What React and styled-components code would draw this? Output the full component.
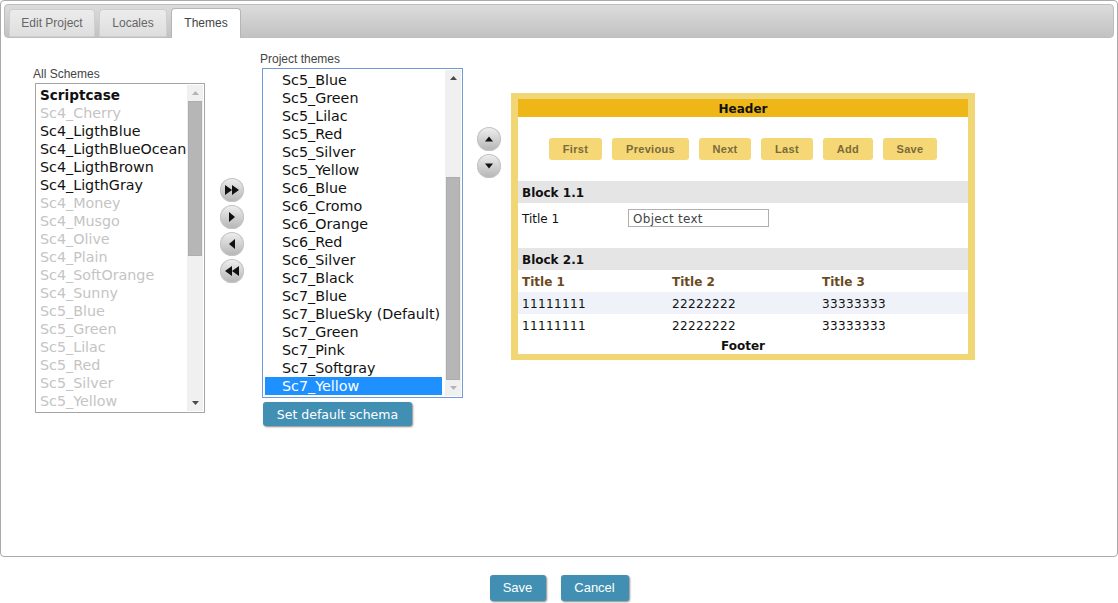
import React from 'react';
import styled, { createGlobalStyle } from 'styled-components';

const allSchemes = [
  ['Scriptcase', 'bold'],
  ['Sc4_Cherry', 'off'],
  ['Sc4_LigthBlue', 'on'],
  ['Sc4_LigthBlueOcean', 'on'],
  ['Sc4_LigthBrown', 'on'],
  ['Sc4_LigthGray', 'on'],
  ['Sc4_Money', 'off'],
  ['Sc4_Musgo', 'off'],
  ['Sc4_Olive', 'off'],
  ['Sc4_Plain', 'off'],
  ['Sc4_SoftOrange', 'off'],
  ['Sc4_Sunny', 'off'],
  ['Sc5_Blue', 'off'],
  ['Sc5_Green', 'off'],
  ['Sc5_Lilac', 'off'],
  ['Sc5_Red', 'off'],
  ['Sc5_Silver', 'off'],
  ['Sc5_Yellow', 'off'],
];

const projectThemes = [
  'Sc5_Blue', 'Sc5_Green', 'Sc5_Lilac', 'Sc5_Red', 'Sc5_Silver', 'Sc5_Yellow',
  'Sc6_Blue', 'Sc6_Cromo', 'Sc6_Orange', 'Sc6_Red', 'Sc6_Silver', 'Sc7_Black',
  'Sc7_Blue', 'Sc7_BlueSky (Default)', 'Sc7_Green', 'Sc7_Pink', 'Sc7_Softgray', 'Sc7_Yellow',
];

const previewButtons = [
  ['First', 53], ['Previous', 77], ['Next', 52], ['Last', 52], ['Add', 50], ['Save', 54],
];

const Triangle = ({ dir, muted }) => {
  const points = { up: '0,4 3.5,0 7,4', down: '0,0 7,0 3.5,4' };
  return (
    <svg width="7" height="4" viewBox="0 0 7 4">
      <polygon points={points[dir]} fill={muted ? '#b4b4b4' : '#4a4a4a'} />
    </svg>
  );
};

const Scrollbar = ({ before, thumb, mutedUp, mutedDown }) => (
  <ScrollTrack>
    <ScrollArrow><Triangle dir="up" muted={mutedUp} /></ScrollArrow>
    <ScrollSlot>
      <ScrollThumb $before={before} $height={thumb} />
    </ScrollSlot>
    <ScrollArrow><Triangle dir="down" muted={mutedDown} /></ScrollArrow>
  </ScrollTrack>
);

const MoveIcon = ({ d }) => (
  <svg width="14" height="12" viewBox="0 0 14 12">
    <path d={d} fill="#111" />
  </svg>
);

const App = () => {
  return (
    <Page>
      <GlobalStyle />
      <Panel>
        <TabBar>
          <Tab $width={86}>Edit Project</Tab>
          <Tab $width={68}>Locales</Tab>
          <Tab $width={70} $active>Themes</Tab>
        </TabBar>
        <Content>
          <SchemeColumn $top={29}>
            <FieldLabel>All Schemes</FieldLabel>
            <ListBox $width={170}>
              <Options>
                {allSchemes.map(([name, state]) => (
                  <Option key={name} $state={state}>{name}</Option>
                ))}
              </Options>
              <Scrollbar before={0} thumb={155} mutedUp />
            </ListBox>
          </SchemeColumn>

          <MoveButtons $top={140} $left={15}>
            <RoundButton><MoveIcon d="M0 1l7 5-7 5zM7 1l7 5-7 5z" /></RoundButton>
            <RoundButton><MoveIcon d="M4 1l6 5-6 5z" /></RoundButton>
            <RoundButton><MoveIcon d="M10 1l-6 5 6 5z" /></RoundButton>
            <RoundButton><MoveIcon d="M7 1l-7 5 7 5zM14 1l-7 5 7 5z" /></RoundButton>
          </MoveButtons>

          <SchemeColumn $top={14} $left={16}>
            <FieldLabel>Project themes</FieldLabel>
            <ListBox $width={201} $focus>
              <Options>
                {projectThemes.map((name) => (
                  <ProjectOption key={name} $selected={name === 'Sc7_Yellow'}>{name}</ProjectOption>
                ))}
              </Options>
              <Scrollbar before={91} thumb={203} mutedDown />
            </ListBox>
            <DefaultButton>Set default schema</DefaultButton>
          </SchemeColumn>

          <MoveButtons $top={89} $left={14}>
            <RoundButton><MoveIcon d="M3 8.5l4-5 4 5z" /></RoundButton>
            <RoundButton><MoveIcon d="M3 3.5l4 5 4-5z" /></RoundButton>
          </MoveButtons>

          <Preview>
            <PreviewHeader>Header</PreviewHeader>
            <PreviewToolbar>
              {previewButtons.map(([label, width]) => (
                <PreviewButton key={label} $width={width}>{label}</PreviewButton>
              ))}
            </PreviewToolbar>
            <BlockTitle>Block 1.1</BlockTitle>
            <FieldRow>
              <FieldName>Title 1</FieldName>
              <ObjectInput>Object text</ObjectInput>
            </FieldRow>
            <BlockTitle>Block 2.1</BlockTitle>
            <GridRow $head>
              <GridCell>Title 1</GridCell>
              <GridCell>Title 2</GridCell>
              <GridCell>Title 3</GridCell>
            </GridRow>
            <GridRow $odd>
              <GridCell>11111111</GridCell>
              <GridCell>22222222</GridCell>
              <GridCell>33333333</GridCell>
            </GridRow>
            <GridRow>
              <GridCell>11111111</GridCell>
              <GridCell>22222222</GridCell>
              <GridCell>33333333</GridCell>
            </GridRow>
            <PreviewFooter>Footer</PreviewFooter>
          </Preview>
        </Content>
      </Panel>
      <Actions>
        <ActionButton $width={56}>Save</ActionButton>
        <ActionButton $width={68}>Cancel</ActionButton>
      </Actions>
    </Page>
  );
};

const GlobalStyle = createGlobalStyle`
  html, body {
    margin: 0;
    padding: 0;
    background: #fff;
  }
  body {
    font-family: "Liberation Sans", Arial, sans-serif;
    font-size: 12px;
  }
`;

const Page = styled.div`
  width: 1118px;
  height: 603px;
  overflow: hidden;
  box-sizing: border-box;
`;

const Panel = styled.div`
  box-sizing: border-box;
  width: 1118px;
  height: 557px;
  padding: 3px;
  border: 1px solid #aaa;
  border-radius: 4px;
  display: flex;
  flex-direction: column;
`;

const TabBar = styled.div`
  box-sizing: border-box;
  height: 34px;
  width: 1110px;
  margin: 0;
  padding: 4px 0 0 4px;
  display: flex;
  gap: 4px;
  align-items: flex-end;
  border: 1px solid #bdbdbd;
  border-radius: 4px;
  background: linear-gradient(#dcdcdc, #c2c2c2);
`;

const Tab = styled.div`
  box-sizing: border-box;
  width: ${(p) => p.$width}px;
  height: ${(p) => (p.$active ? '30px' : '28px')};
  margin-bottom: ${(p) => (p.$active ? '-1px' : '0')};
  line-height: ${(p) => (p.$active ? '28px' : '27px')};
  text-align: center;
  font-size: 12px;
  color: ${(p) => (p.$active ? '#444' : '#666')};
  border: 1px solid ${(p) => (p.$active ? '#b5b5b5' : '#cfcfcf')};
  border-bottom: ${(p) => (p.$active ? '0' : '1px solid #cfcfcf')};
  border-radius: 4px 4px 0 0;
  background: ${(p) => (p.$active ? '#fff' : 'linear-gradient(#ececec, #dedede)')};
`;

const Content = styled.div`
  display: flex;
  align-items: flex-start;
  padding-left: 29px;
`;

const SchemeColumn = styled.div`
  margin-top: ${(p) => p.$top}px;
  margin-left: ${(p) => p.$left || 0}px;
  display: flex;
  flex-direction: column;
`;

const FieldLabel = styled.div`
  height: 16px;
  line-height: 14px;
  font-size: 12px;
  color: #444;
`;

const ListBox = styled.div`
  box-sizing: border-box;
  width: ${(p) => p.$width}px;
  height: 330px;
  margin-left: 2px;
  display: flex;
  background: #fff;
  border: 1px solid ${(p) => (p.$focus ? '#6f9bd8' : '#a5a5a5')};
  padding: 1px;
`;

const Options = styled.div`
  flex: 1;
  min-width: 0;
  padding-top: 1px;
  overflow: hidden;
  font-family: "DejaVu Sans", Verdana, sans-serif;
  font-size: 14.3px;
`;

const Option = styled.div`
  height: 18px;
  line-height: 18px;
  padding-left: 3px;
  white-space: nowrap;
  color: ${(p) => (p.$state === 'off' ? '#c4c4c4' : '#111')};
  font-weight: ${(p) => (p.$state === 'bold' ? 700 : 400)};
  font-size: ${(p) => (p.$state === 'bold' ? '13.6px' : 'inherit')};
`;

const ProjectOption = styled.div`
  height: 18px;
  line-height: 18px;
  padding-left: 17px;
  margin: 0 3px 0 1px;
  white-space: nowrap;
  color: ${(p) => (p.$selected ? '#fff' : '#111')};
  background: ${(p) => (p.$selected ? '#1e90ff' : 'transparent')};
`;

const ScrollTrack = styled.div`
  width: 16px;
  flex: none;
  display: flex;
  flex-direction: column;
  background: #f0f0f0;
`;

const ScrollArrow = styled.div`
  height: 16px;
  flex: none;
  display: flex;
  align-items: center;
  justify-content: center;
`;

const ScrollSlot = styled.div`
  flex: 1;
  padding: 0 1px;
`;

const ScrollThumb = styled.div`
  margin-top: ${(p) => p.$before}px;
  height: ${(p) => p.$height}px;
  background: #b6b6b6;
  border: 1px solid #adadad;
  box-sizing: border-box;
`;

const MoveButtons = styled.div`
  margin-top: ${(p) => p.$top}px;
  margin-left: ${(p) => p.$left}px;
  width: 24px;
  display: flex;
  flex-direction: column;
  gap: 3px;
`;

const RoundButton = styled.div`
  width: 24px;
  height: 24px;
  border-radius: 50%;
  display: flex;
  align-items: center;
  justify-content: center;
  background: linear-gradient(#f0f0f0, #b4b4b4);
  box-shadow: inset 0 0 0 1px #c4c4c4;
`;

const DefaultButton = styled.div`
  box-sizing: border-box;
  width: 149px;
  height: 24px;
  margin: 4px 0 0 3px;
  line-height: 26px;
  text-align: center;
  color: #fff;
  font-family: "DejaVu Sans", Verdana, sans-serif;
  font-size: 12.5px;
  background: #418fb3;
  border-radius: 3px;
  box-shadow: 1px 1px 2px #888;
`;

const Preview = styled.div`
  box-sizing: border-box;
  width: 464px;
  height: 267px;
  margin: 55px 0 0 10px;
  border: solid #f0d675;
  border-width: 6px 7px;
  background: #fff;
  font-family: "DejaVu Sans", Verdana, sans-serif;
  font-size: 12px;
  color: #111;
`;

const PreviewHeader = styled.div`
  height: 18px;
  line-height: 20px;
  text-align: center;
  font-weight: 700;
  background: #eeb717;
`;

const PreviewToolbar = styled.div`
  height: 64px;
  padding-left: 31px;
  display: flex;
  align-items: center;
  gap: 10px;
`;

const PreviewButton = styled.div`
  width: ${(p) => p.$width}px;
  height: 22px;
  line-height: 22px;
  text-align: center;
  font-family: "Liberation Sans", Arial, sans-serif;
  font-size: 11px;
  font-weight: 700;
  letter-spacing: 0.3px;
  color: #7a6a3a;
  background: #f5d776;
  border-radius: 3px;
`;

const BlockTitle = styled.div`
  height: 22px;
  line-height: 24px;
  padding-left: 4px;
  font-weight: 700;
  background: #e5e5e5;
`;

const FieldRow = styled.div`
  height: 45px;
  padding: 6px 0 0 4px;
  box-sizing: border-box;
  display: flex;
  align-items: flex-start;
`;

const FieldName = styled.div`
  width: 106px;
  line-height: 20px;
`;

const ObjectInput = styled.div`
  box-sizing: border-box;
  width: 141px;
  height: 18px;
  padding-left: 4px;
  line-height: 18px;
  letter-spacing: 0.3px;
  color: #444;
  border: 1px solid #b0b0b0;
`;

const GridRow = styled.div`
  height: 22px;
  padding-left: 4px;
  display: grid;
  grid-template-columns: 150px 150px 150px;
  line-height: 24px;
  font-weight: ${(p) => (p.$head ? 700 : 400)};
  letter-spacing: ${(p) => (p.$head ? '0' : '0.38px')};
  color: ${(p) => (p.$head ? '#6b4a1e' : '#111')};
  background: ${(p) => (p.$odd ? '#eff2f8' : '#fff')};
`;

const GridCell = styled.div`
  white-space: nowrap;
`;

const PreviewFooter = styled.div`
  height: 18px;
  line-height: 20px;
  text-align: center;
  font-weight: 700;
`;

const Actions = styled.div`
  margin-top: 18px;
  display: flex;
  justify-content: center;
  gap: 15px;
`;

const ActionButton = styled.div`
  width: ${(p) => p.$width}px;
  height: 26px;
  line-height: 26px;
  text-align: center;
  color: #fff;
  font-size: 13px;
  background: #418fb3;
  border-radius: 3px;
  box-shadow: 1px 1px 2px #888;
`;

export default App;
